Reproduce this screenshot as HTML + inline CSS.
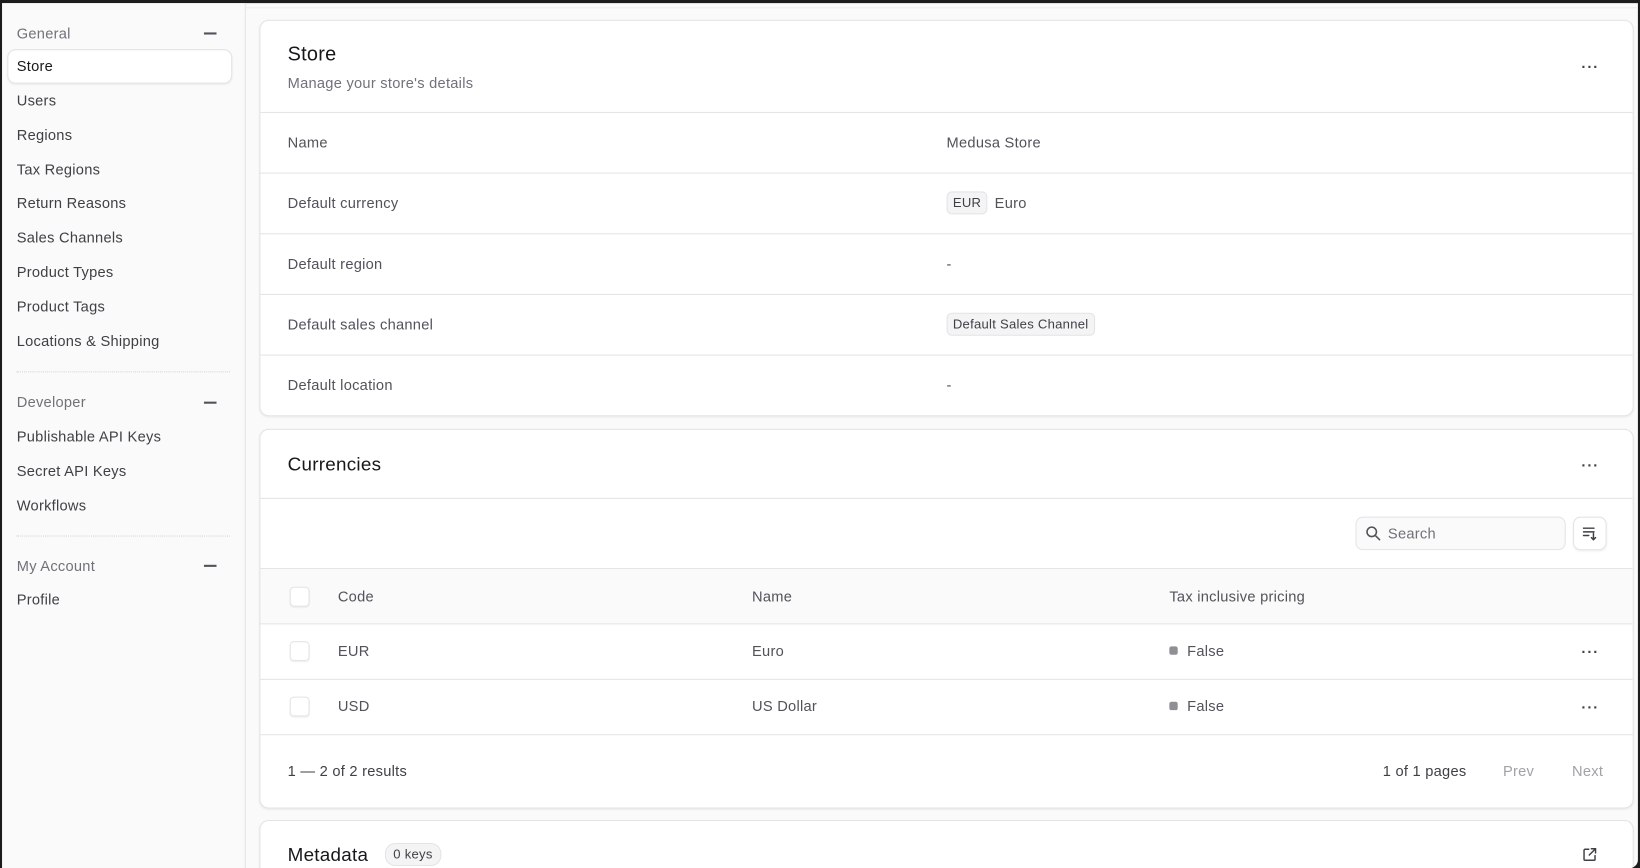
<!DOCTYPE html>
<html><head><meta charset="utf-8"><style>
html,body{margin:0;padding:0;width:1640px;height:868px;overflow:hidden;background:#1c1c1c}
#s{position:absolute;left:0;top:0;width:1568px;height:830px;transform:scale(1.04592);transform-origin:0 0;font-family:"Liberation Sans",sans-serif;font-size:14px;color:#52525b;letter-spacing:0.25px}
.a{position:absolute}
#frame{left:2px;top:3px;width:1564px;height:827px;background:#fafafa;border-bottom-right-radius:8px;overflow:hidden}
#side{left:0;top:0;width:232px;height:827px;background:#fafafa;border-right:1px solid #e4e4e7}
.it{position:absolute;left:14px;line-height:16px;color:#3f3f46;font-weight:500}
.gl{position:absolute;left:14px;color:#71717a;line-height:16px}
.mn{position:absolute;left:193px;width:12px;height:1.5px;background:#52525b}
.sep{position:absolute;left:14px;width:204px;border-top:1px dotted #d4d4d8}
.card{position:absolute;left:246px;width:1312px;background:#fff;border:1px solid #e4e4e7;border-radius:9px;box-shadow:0 1px 2px rgba(0,0,0,.06)}
.hr{position:absolute;left:0;right:0;height:1px;background:#e4e4e7}
.t{position:absolute;line-height:16px;white-space:nowrap}
.dots{position:absolute;font-size:14px;letter-spacing:1px;color:#3f3f46;font-weight:bold;line-height:10px}
.badge{position:absolute;background:#f4f4f5;border:1px solid #e4e4e7;border-radius:5px;font-size:12.5px;color:#3f3f46;padding:0 5px;line-height:20px}
.cb{position:absolute;left:28px;width:17px;height:17px;border:1px solid #e4e4e7;border-radius:4px;background:#fff;box-shadow:0 1px 1px rgba(0,0,0,.05)}
.sq{position:absolute;width:8px;height:8px;border-radius:2px;background:#8f8f95}
</style></head><body><div id="s">
<div id="frame" class="a">
 <div id="side" class="a">
  <div class="gl" style="top:21px">General</div><div class="mn" style="top:28px"></div>
  <div class="a" style="left:5px;top:44px;width:213px;height:31px;background:#fff;border:1px solid #e4e4e7;border-radius:8px;box-shadow:0 1px 2px rgba(0,0,0,.06)"></div>
  <div class="it" style="top:52px;color:#18181b">Store</div>
  <div class="it" style="top:85px">Users</div>
  <div class="it" style="top:118px">Regions</div>
  <div class="it" style="top:151px">Tax Regions</div>
  <div class="it" style="top:183px">Return Reasons</div>
  <div class="it" style="top:216px">Sales Channels</div>
  <div class="it" style="top:249px">Product Types</div>
  <div class="it" style="top:282px">Product Tags</div>
  <div class="it" style="top:315px">Locations &amp; Shipping</div>
  <div class="sep" style="top:352px"></div>
  <div class="gl" style="top:373px">Developer</div><div class="mn" style="top:381px"></div>
  <div class="it" style="top:406px">Publishable API Keys</div>
  <div class="it" style="top:439px">Secret API Keys</div>
  <div class="it" style="top:472px">Workflows</div>
  <div class="sep" style="top:509px"></div>
  <div class="gl" style="top:530px">My Account</div><div class="mn" style="top:537px"></div>
  <div class="it" style="top:562px">Profile</div>
 </div>
 <div class="a" style="left:233px;top:4px;right:0;height:1px;background:#ececee"></div>

 <div class="card" style="top:16px;height:377px">
  <div class="t" style="left:26px;top:23px;font-size:19px;color:#18181b;font-weight:500;line-height:20px">Store</div>
  <div class="t" style="left:26px;top:51px;color:#71717a">Manage your store's details</div>
  <div class="dots" style="left:1263px;top:39px">···</div>
  <div class="hr" style="top:87px"></div>
  <div class="t" style="left:26px;top:108px">Name</div><div class="t" style="left:656px;top:108px">Medusa Store</div>
  <div class="hr" style="top:145px"></div>
  <div class="t" style="left:26px;top:166px">Default currency</div>
  <div class="badge" style="left:656px;top:163px">EUR</div><div class="t" style="left:702px;top:166px">Euro</div>
  <div class="hr" style="top:203px"></div>
  <div class="t" style="left:26px;top:224px">Default region</div><div class="t" style="left:656px;top:224px">-</div>
  <div class="hr" style="top:261px"></div>
  <div class="t" style="left:26px;top:282px">Default sales channel</div>
  <div class="badge" style="left:656px;top:279px">Default Sales Channel</div>
  <div class="hr" style="top:319px"></div>
  <div class="t" style="left:26px;top:340px">Default location</div><div class="t" style="left:656px;top:340px">-</div>
 </div>

 <div class="card" style="top:407px;height:361px;overflow:hidden">
  <div class="t" style="left:26px;top:23px;font-size:18px;color:#18181b;font-weight:500;line-height:20px">Currencies</div>
  <div class="dots" style="left:1263px;top:29px">···</div>
  <div class="hr" style="top:65px"></div>
  <div class="a" style="left:1047px;top:83px;width:199px;height:30px;border:1px solid #e4e4e7;border-radius:7px;background:#fafafa"></div>
  <svg class="a" style="left:1056px;top:91px" width="16" height="16" viewBox="0 0 16 16"><circle cx="6.5" cy="6.5" r="4.5" fill="none" stroke="#52525b" stroke-width="1.5"/><path d="M10 10l4 4" stroke="#52525b" stroke-width="1.5" stroke-linecap="round"/></svg>
  <div class="t" style="left:1078px;top:91px;color:#71717a">Search</div>
  <div class="a" style="left:1255px;top:83px;width:30px;height:30px;border:1px solid #e4e4e7;border-radius:7px;background:#fff;box-shadow:0 1px 2px rgba(0,0,0,.06)"></div>
  <svg class="a" style="left:1263px;top:91px" width="16" height="16" viewBox="0 0 16 16" fill="none" stroke="#3f3f46" stroke-width="1.4" stroke-linecap="round"><path d="M2 3h10M2 6.5h10M2 10h5M11.5 8v6M9.5 12l2 2 2-2"/></svg>
  <div class="a" style="left:0;right:0;top:132px;height:52px;background:#fafafa;border-top:1px solid #e4e4e7;border-bottom:1px solid #e4e4e7"></div>
  <div class="cb" style="top:150px"></div>
  <div class="t" style="left:74px;top:151px;font-weight:500">Code</div>
  <div class="t" style="left:470px;top:151px;font-weight:500">Name</div>
  <div class="t" style="left:869px;top:151px;font-weight:500">Tax inclusive pricing</div>
  <div class="cb" style="top:202px"></div>
  <div class="t" style="left:74px;top:203px">EUR</div><div class="t" style="left:470px;top:203px">Euro</div>
  <div class="sq" style="left:869px;top:207px"></div><div class="t" style="left:886px;top:203px">False</div>
  <div class="dots" style="left:1263px;top:207px">···</div>
  <div class="hr" style="top:238px"></div>
  <div class="cb" style="top:255px"></div>
  <div class="t" style="left:74px;top:256px">USD</div><div class="t" style="left:470px;top:256px">US Dollar</div>
  <div class="sq" style="left:869px;top:260px"></div><div class="t" style="left:886px;top:256px">False</div>
  <div class="dots" style="left:1263px;top:260px">···</div>
  <div class="hr" style="top:291px"></div>
  <div class="t" style="left:26px;top:318px;font-weight:500;color:#3f3f46">1 — 2 of 2 results</div>
  <div class="t" style="left:1073px;top:318px;font-weight:500;color:#3f3f46">1 of 1 pages</div>
  <div class="t" style="left:1188px;top:318px;color:#a1a1aa;font-weight:500">Prev</div>
  <div class="t" style="left:1254px;top:318px;color:#a1a1aa;font-weight:500">Next</div>
 </div>

 <div class="card" style="top:781px;height:80px">
  <div class="t" style="left:26px;top:22px;font-size:18px;color:#18181b;font-weight:500;line-height:20px">Metadata</div>
  <div class="badge" style="left:119px;top:21px;border-radius:10px;padding:0 7px">0 keys</div>
  <svg class="a" style="left:1263px;top:24px" width="16" height="16" viewBox="0 0 16 16" fill="none" stroke="#3f3f46" stroke-width="1.4" stroke-linecap="round"><path d="M7 3H3.5A1 1 0 0 0 2.5 4v8.5a1 1 0 0 0 1 1H12a1 1 0 0 0 1-1V9M9.5 2.5h4v4M13.5 2.5L7.5 8.5"/></svg>
 </div>
</div>
</div></body></html>
